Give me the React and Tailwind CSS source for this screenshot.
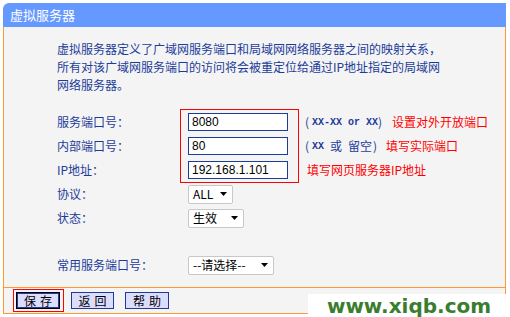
const cjk = { fontFamily: '"SimSun", "Noto Sans CJK SC", sans-serif' }
const mono = { fontFamily: '"Liberation Mono", monospace' }

function Arrow() {
  return (
    <svg width="7" height="4" viewBox="0 0 7 4" className="shrink-0">
      <path d="M0 0 H7 L3.5 4 Z" fill="#000" />
    </svg>
  )
}

function Select({ label, width }) {
  return (
    <div className={`${width} h-[19px] bg-white border border-[#c8c8c8] rounded-[2px] flex items-center justify-between pl-[4px] pr-[5px] text-[12px] text-black`}>
      <span>{label}</span>
      <Arrow />
    </div>
  )
}

function Field({ value }) {
  return (
    <div className="w-[100px] h-[18px] bg-white border border-[#1d3c9a] flex items-center pl-[3px] text-[12px] text-black" style={{ fontFamily: '"Liberation Sans", Arial, sans-serif' }}>
      {value}
    </div>
  )
}

export default function App() {
  return (
    <div className="relative w-[510px] h-[317px] bg-white overflow-hidden" style={cjk}>
      <div className="ml-[3px] mt-[3px] w-[503px] flex flex-col">
        {/* title */}
        <div className="h-6 bg-[#6699ff] rounded-tl-[6px] flex items-center pl-[7px] text-white text-[13px]">
          虚拟服务器
        </div>

        {/* body */}
        <div className="h-[261px] bg-[#f4f4f4] border-x border-b border-[#ff9933] pl-[53px] pt-[13px] text-[#1d3c9a] text-[12px]">
          <p className="leading-[18px]">
            虚拟服务器定义了广域网服务端口和局域网网络服务器之间的映射关系，<br />
            所有对该广域网服务端口的访问将会被重定位给通过IP地址指定的局域网<br />
            网络服务器。
          </p>

          <div className="relative mt-[16px] flex flex-col">
            <div className="absolute left-[123px] top-[-1px] w-[119px] h-[74px] border border-[#ff0000]" />

            <div className="h-6 flex items-center">
              <span className="w-[131px]">服务端口号：</span>
              <Field value="8080" />
              <span className="ml-[17px] flex items-center gap-[8px]">
                <span className="flex items-center">
                  <span className="w-[7px]">(</span>
                  <span className="font-bold text-[10px] w-[66px]" style={mono}>XX-XX or XX</span>
                  <span className="w-[6px]">)</span>
                </span>
                <span className="text-[#ff0000]">设置对外开放端口</span>
              </span>
            </div>

            <div className="h-6 flex items-center">
              <span className="w-[131px]">内部端口号：</span>
              <Field value="80" />
              <span className="ml-[17px] flex items-center gap-[6px]">
                <span className="flex items-center">
                  <span className="w-[7px]">(</span>
                  <span className="font-bold text-[10px]" style={mono}>XX</span>
                  <span className="ml-[6px]">或</span>
                  <span className="ml-[6px]">留空</span>
                  <span className="w-[8px] pl-[1px]">)</span>
                </span>
                <span className="text-[#ff0000]">填写实际端口</span>
              </span>
            </div>

            <div className="h-6 flex items-center">
              <span className="w-[131px]">IP地址：</span>
              <Field value="192.168.1.101" />
              <span className="ml-[19px] text-[#ff0000]">填写网页服务器IP地址</span>
            </div>

            <div className="h-6 flex items-center">
              <span className="w-[131px]">协议：</span>
              <Select label="ALL" width="w-[45px]" />
            </div>

            <div className="h-6 flex items-center">
              <span className="w-[131px]">状态：</span>
              <Select label="生效" width="w-[56px]" />
            </div>

            <div className="h-[23px]" />

            <div className="h-6 flex items-center">
              <span className="w-[131px]">常用服务端口号：</span>
              <Select label="--请选择--" width="w-[86px]" />
            </div>
          </div>
        </div>

        {/* footer */}
        <div className="h-[26px] bg-[#f4f4f4] border-x border-b border-[#ff9933] pl-3 flex items-center gap-[11px] text-[12px] text-black">
          <span className="relative flex">
            <span className="absolute -left-[3px] -top-[3px] w-[51px] h-[23px] border border-[#ff0000]" />
            <button className="w-[44px] h-[17px] bg-[#dcdcfc] border border-black shadow-[inset_0_0_0_1px_#1d3c9a] flex items-center justify-center tracking-[4px] pl-[4px]">
              保存
            </button>
          </span>
          <button className="w-[43px] h-[17px] bg-[#dcdcfc] border border-[#1d3c9a] flex items-center justify-center tracking-[4px] pl-[4px]">
            返回
          </button>
          <button className="w-[44px] h-[17px] bg-[#dcdcfc] border border-[#1d3c9a] flex items-center justify-center tracking-[4px] pl-[4px]">
            帮助
          </button>
        </div>
      </div>

      {/* watermark */}
      <div className="absolute left-[308px] top-[294px] w-[202px] h-[23px] bg-white flex items-center justify-center">
        <span className="text-[20px] font-bold text-[#3b7d2f] leading-none" style={{ fontFamily: '"DejaVu Sans", Verdana, sans-serif' }}>
          www.xiqb.com
        </span>
      </div>
    </div>
  )
}
